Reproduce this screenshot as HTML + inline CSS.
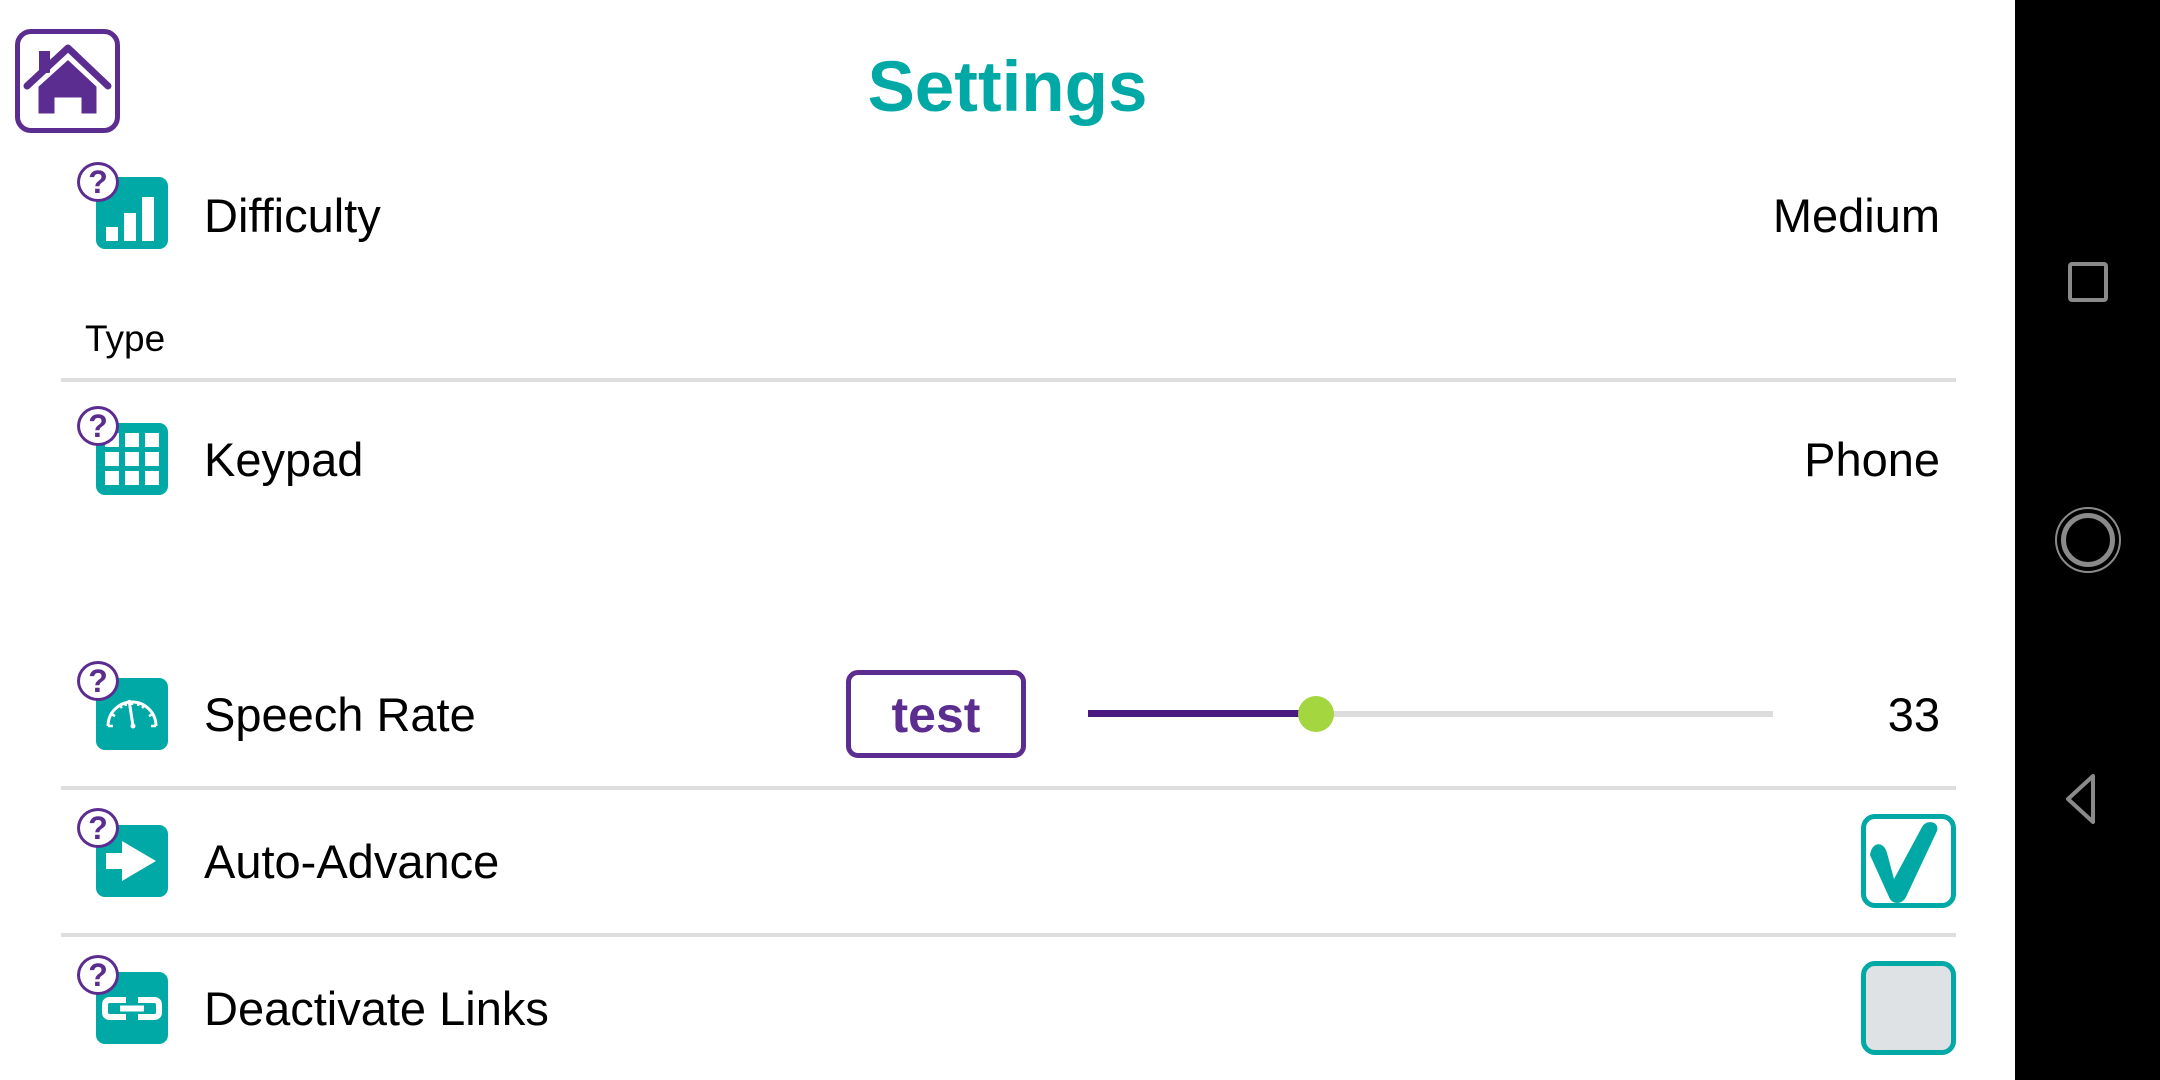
<!DOCTYPE html>
<html><head><meta charset="utf-8"><style>
*{margin:0;padding:0;box-sizing:border-box}
body{width:2160px;height:1080px;background:#fff;position:relative;overflow:hidden;font-family:"Liberation Sans",sans-serif;color:#000}
.a{position:absolute}
.lbl{position:absolute;left:204px;font-size:47px;line-height:1;white-space:nowrap}
.val{position:absolute;right:220px;font-size:47px;line-height:1;white-space:nowrap}
.div{position:absolute;left:61px;width:1895px;height:4px;background:#dedede}
.ic{position:absolute;left:96px;width:72px;height:72px;background:#00a9a5;border-radius:9px}
.q{position:absolute;left:77px;width:42px;height:40px;border:3px solid #5c2d91;border-radius:50%;background:#fff;color:#5c2d91;font-weight:bold;font-size:32px;line-height:34px;text-align:center}
.cb{position:absolute;left:1861px;width:95px;height:94px;border:5px solid #00a9a5;border-radius:14px}
</style></head><body>
<!-- home -->
<div class="a" style="left:15px;top:29px;width:105px;height:104px;border:5px solid #5c2d91;border-radius:16px"></div>
<svg class="a" style="left:15px;top:29px" width="105" height="104" viewBox="0 0 105 104">
<rect x="24" y="22" width="11" height="22" fill="#5c2d91"/>
<path d="M12 57 L53 19 L93 57" fill="none" stroke="#5c2d91" stroke-width="7" stroke-linejoin="round" stroke-linecap="round"/>
<path d="M22 57 L53 29 L83 57 L83 86 L65 86 L65 70 L41 70 L41 86 L22 86 Z" fill="#5c2d91" stroke="#fff" stroke-width="3"/>
</svg>
<div class="a" style="left:0;width:2015px;top:52px;text-align:center;font-size:71px;font-weight:bold;color:#00a9a5;line-height:1">Settings</div>

<!-- Difficulty -->
<div class="ic" style="top:177px"><svg width="72" height="72"><rect x="10" y="50" width="12" height="14" fill="#fff"/><rect x="28" y="36" width="12" height="28" fill="#fff"/><rect x="46" y="20" width="12" height="44" fill="#fff"/></svg></div>
<div class="q" style="top:162px">?</div>
<div class="lbl" style="top:192px">Difficulty</div>
<div class="val" style="top:192px">Medium</div>

<div class="a" style="left:85px;top:320px;font-size:37px;line-height:1">Type</div>
<div class="div" style="top:378px"></div>

<!-- Keypad -->
<div class="ic" style="top:423px"><svg width="72" height="72"><g fill="#fff"><rect x="9" y="10" width="14" height="14"/><rect x="29" y="10" width="14" height="14"/><rect x="49" y="10" width="14" height="14"/><rect x="9" y="29" width="14" height="14"/><rect x="29" y="29" width="14" height="14"/><rect x="49" y="29" width="14" height="14"/><rect x="9" y="48" width="14" height="14"/><rect x="29" y="48" width="14" height="14"/><rect x="49" y="48" width="14" height="14"/></g></svg></div>
<div class="q" style="top:406px">?</div>
<div class="lbl" style="top:436px">Keypad</div>
<div class="val" style="top:436px">Phone</div>

<!-- Speech Rate -->
<div class="ic" style="top:678px"><svg width="72" height="72"><path d="M12 48 A24 24 0 0 1 60 48" fill="none" stroke="#fff" stroke-width="3"/><g stroke="#fff" stroke-width="2.5"><path d="M12 48 h5 M60 48 h-5 M15 36 l4 2 M57 36 l-4 2 M23 27 l3 3 M49 27 l-3 3 M36 23 v4 M29 24 l1 4 M43 24 l-1 4"/></g><path d="M33 22 L37 48" stroke="#fff" stroke-width="3"/><circle cx="37" cy="48" r="2.5" fill="#fff"/></svg></div>
<div class="q" style="top:661px">?</div>
<div class="lbl" style="top:691px">Speech Rate</div>
<div class="a" style="left:846px;top:670px;width:180px;height:88px;border:5px solid #5c2d91;border-radius:12px;text-align:center;font-size:50px;font-weight:bold;color:#5c2d91;line-height:80px">test</div>
<div class="a" style="left:1088px;top:711px;width:685px;height:6px;background:#dcdcdc"></div>
<div class="a" style="left:1088px;top:710px;width:228px;height:7px;background:#4a1a80"></div>
<div class="a" style="left:1298px;top:696px;width:36px;height:36px;border-radius:50%;background:#a4d63f"></div>
<div class="val" style="top:691px">33</div>
<div class="div" style="top:786px"></div>

<!-- Auto-Advance -->
<div class="ic" style="top:825px"><svg width="72" height="72"><path d="M10 28 H26 V16 L60 36 L26 56 V44 H10 Z" fill="#fff"/></svg></div>
<div class="q" style="top:808px">?</div>
<div class="lbl" style="top:838px">Auto-Advance</div>
<div class="cb" style="top:814px"><svg width="85" height="84"><path d="M4 36 C6 22 18 22 21 34 L28 60 L56 8 C60 0 74 2 71 12 L40 78 C36 86 26 86 23 78 Z" fill="#00a9a5"/></svg></div>
<div class="div" style="top:933px"></div>

<!-- Deactivate Links -->
<div class="ic" style="top:972px"><svg width="72" height="72"><path d="M30 28 H14 Q9 28 9 33 V40 Q9 45 14 45 H30 M42 28 H58 Q63 28 63 33 V40 Q63 45 58 45 H42 M24 36.5 H48" fill="none" stroke="#fff" stroke-width="6"/></svg></div>
<div class="q" style="top:955px">?</div>
<div class="lbl" style="top:985px">Deactivate Links</div>
<div class="cb" style="top:961px;background:#dfe2e5"></div>

<!-- nav bar -->
<div class="a" style="left:2015px;top:0;width:145px;height:1080px;background:#000"></div>
<div class="a" style="left:2068px;top:262px;width:40px;height:40px;border:4px solid #8a8a8a;border-radius:4px"></div>
<div class="a" style="left:2055px;top:507px;width:66px;height:66px;border:2px solid #8a8a8a;border-radius:50%"></div>
<div class="a" style="left:2061px;top:513px;width:54px;height:54px;border:5px solid #8a8a8a;border-radius:50%"></div>
<svg class="a" style="left:2060px;top:772px" width="50" height="54"><path d="M33 4 L8 27 L33 50 Z" fill="none" stroke="#8a8a8a" stroke-width="4" stroke-linejoin="round"/></svg>
</body></html>
